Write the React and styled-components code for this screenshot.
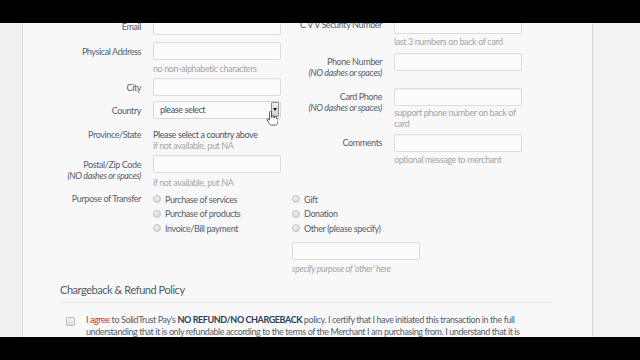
import React from 'react';
import styled, { createGlobalStyle } from 'styled-components';

const GlobalStyle = createGlobalStyle`
    html, body { margin: 0; padding: 0; background: #000; }
    body {
        font-family: "Lato", sans-serif;
        font-size: 9px;
        letter-spacing: -0.4px;
        color: #56616f;
    }
`;

/* FRAME */
const Screen = styled.div`
    width: 640px;
    height: 360px;
    display: flex;
    flex-direction: column;
    background: #000;
    overflow: hidden;
`;
const Letterbox = styled.div`
    height: ${p => p.$h}px;
    flex-shrink: 0;
    background: #000;
`;
const Viewport = styled.div`
    flex: 1;
    display: flex;
    overflow: hidden;
    background: #f1f1f1;
`;
const Gutter = styled.div`
    width: ${p => p.$w ? `${p.$w}px` : 'auto'};
    flex: ${p => p.$w ? 'none' : 1};
    background: ${p => p.$bg};
`;
const Panel = styled.main`
    width: 571px;
    flex-shrink: 0;
    box-sizing: border-box;
    background: #f8f8f8;
    border-left: 1px solid #dcdcdc;
    border-right: 1px solid #d2d2d2;
`;
const Content = styled.div`
    margin-top: -6px;
`;

/* FORM */
const Columns = styled.div`
    display: flex;
    align-items: flex-start;
`;
const Column = styled.div`
    display: flex;
    flex-direction: column;
    margin-top: ${p => p.$mt || 0}px;
`;
const Field = styled.div`
    display: grid;
    grid-template-columns: ${p => p.$lw}px 128px;
    column-gap: 12px;
    align-items: start;
    margin-bottom: ${p => p.$mb || 0}px;
`;
const Label = styled.div`
    text-align: right;
    line-height: 11px;
    padding-top: ${p => p.$pt ?? 3.5}px;
    color: #56616f;
    white-space: nowrap;
`;
const Sub = styled.div`
    font-style: italic;
`;
const Control = styled.div`
    display: flex;
    flex-direction: column;
`;
const Input = styled.div`
    width: ${p => p.$w || 128}px;
    height: 18px;
    box-sizing: border-box;
    border: 1px solid #dcdcdc;
    border-radius: 2px;
    background: #fcfcfc;
    box-shadow: inset 0 1px 1px rgba(0, 0, 0, 0.03);
    margin-top: ${p => p.$mt || 0}px;
`;
const Hint = styled.div`
    color: #a5a5a5;
    line-height: 11px;
    margin-top: ${p => p.$mt || 0}px;
    font-style: ${p => p.$italic ? 'italic' : 'normal'};
    white-space: nowrap;
`;
const Notice = styled.div`
    color: #4a5667;
    line-height: 11px;
`;

/* SELECT */
const Select = styled.div`
    position: relative;
    width: 128px;
    height: 18px;
    box-sizing: border-box;
    border: 1px solid #d6d6d6;
    border-radius: 2px;
    background: #fbfbfb;
    display: flex;
    align-items: flex-start;
`;
const SelectText = styled.span`
    flex: 1;
    line-height: 16px;
    padding-left: 6px;
    color: #4a5463;
`;
const DropButton = styled.span`
    width: 8px;
    height: 15px;
    box-sizing: border-box;
    margin-right: 1px;
    border: 1px solid #8f8f8f;
    border-radius: 1px;
    background: linear-gradient(#f2f2f2, #cfcfcf);
    display: flex;
    align-items: center;
    justify-content: center;
    &::after {
        content: '';
        border-left: 2px solid transparent;
        border-right: 2px solid transparent;
        border-top: 3px solid #111;
    }
`;
const Cursor = styled.svg`
    position: absolute;
    left: 112px;
    top: 9px;
    width: 12px;
    height: 15px;
`;

/* PURPOSE */
const Purpose = styled.div`
    display: grid;
    grid-template-columns: 118px auto;
    column-gap: 12px;
    margin-top: 4.25px;
`;
const PurposeLabel = styled(Label)`
    padding-top: 0;
    line-height: 14.5px;
`;
const Options = styled.div`
    display: grid;
    grid-template-columns: 139px auto;
`;
const OptionGroup = styled.div`
    display: flex;
    flex-direction: column;
`;
const Option = styled.label`
    height: 14.5px;
    display: flex;
    align-items: center;
    color: #56616f;
`;
const Radio = styled.span`
    width: 8px;
    height: 8px;
    box-sizing: border-box;
    border-radius: 50%;
    border: 1px solid #c4c4c4;
    background: radial-gradient(circle at 40% 35%, #f2f2f2, #cdcdcd);
    margin-right: 4px;
    flex-shrink: 0;
`;

/* POLICY */
const Heading = styled.h2`
    margin: 9.5px 40px 0 37px;
    padding-bottom: 5px;
    border-bottom: 1px solid #e7e7e7;
    font-size: 11px;
    letter-spacing: -0.45px;
    line-height: 14px;
    font-weight: normal;
    color: #535c67;
`;
const Agree = styled.div`
    display: flex;
    align-items: flex-start;
    margin: 11px 40px 0 43px;
`;
const CheckBox = styled.span`
    width: 9px;
    height: 9px;
    flex-shrink: 0;
    box-sizing: border-box;
    margin-top: 3px;
    border: 1px solid #bdbdbd;
    border-radius: 1px;
    background: linear-gradient(#f3f3f3, #dedede);
`;
const AgreeText = styled.p`
    margin: 0 0 0 11px;
    max-width: 446px;
    line-height: 12px;
    letter-spacing: -0.41px;
    color: #56616f;
`;
const Red = styled.span`
    color: #c53535;
`;
const Strong = styled.strong`
    color: #2d3d55;
`;

function HandCursor() {
    return (
        <Cursor viewBox="0 0 12 15">
            <path
                d="M3.5 1.5a1 1 0 0 1 2 0V6.5h.4V5.6a1 1 0 0 1 2 0V7h.4V6.2a1 1 0 0 1 2 0V7.6h.2a.9.9 0 0 1 1.5.7v2.6c0 1.6-1 3.2-2.6 3.2H5.6c-1.2 0-2-1-2.6-2L1.1 9a.9.9 0 0 1 1.4-1.1L3.5 9.2Z"
                fill="#fff"
                stroke="#222"
                strokeWidth="0.7"
                strokeLinejoin="round"
            />
        </Cursor>
    );
}

export default function App() {
    const leftOptions = ['Purchase of services', 'Purchase of products', 'Invoice/Bill payment'];
    const rightOptions = ['Gift', 'Donation', 'Other (please specify)'];

    return <>
        <GlobalStyle />
        <Screen>
            <Letterbox $h={23} />
            <Viewport>
                <Gutter $w={22} $bg="#f0f0f0" />
                <Panel>
                    <Content>
                        <Columns>
                            <Column>
                                <Field $lw={118} $mb={7}>
                                    <Label>Email</Label>
                                    <Control><Input /></Control>
                                </Field>
                                <Field $lw={118} $mb={4.5}>
                                    <Label>Physical Address</Label>
                                    <Control>
                                        <Input />
                                        <Hint $mt={2.5}>no non-alphabetic characters</Hint>
                                    </Control>
                                </Field>
                                <Field $lw={118} $mb={5}>
                                    <Label>City</Label>
                                    <Control><Input /></Control>
                                </Field>
                                <Field $lw={118} $mb={9.5}>
                                    <Label>Country</Label>
                                    <Control>
                                        <Select>
                                            <SelectText>please select</SelectText>
                                            <DropButton />
                                            <HandCursor />
                                        </Select>
                                    </Control>
                                </Field>
                                <Field $lw={118} $mb={4.5}>
                                    <Label $pt={0}>Province/State</Label>
                                    <Control>
                                        <Notice>Please select a country above</Notice>
                                        <Hint>if not available, put NA</Hint>
                                    </Control>
                                </Field>
                                <Field $lw={118}>
                                    <Label>
                                        Postal/Zip Code
                                        <Sub>(NO dashes or spaces)</Sub>
                                    </Label>
                                    <Control>
                                        <Input />
                                        <Hint $mt={3.5}>if not available, put NA</Hint>
                                    </Control>
                                </Field>
                            </Column>
                            <Column $mt={-1.5}>
                                <Field $lw={101} $mb={5.5}>
                                    <Label>C V V Security Number</Label>
                                    <Control>
                                        <Input />
                                        <Hint $mt={2.5}>last 3 numbers on back of card</Hint>
                                    </Control>
                                </Field>
                                <Field $lw={101} $mb={9.5}>
                                    <Label>
                                        Phone Number
                                        <Sub>(NO dashes or spaces)</Sub>
                                    </Label>
                                    <Control><Input /></Control>
                                </Field>
                                <Field $lw={101} $mb={5}>
                                    <Label>
                                        Card Phone
                                        <Sub>(NO dashes or spaces)</Sub>
                                    </Label>
                                    <Control>
                                        <Input />
                                        <Hint $mt={1}>support phone number on back of<br />card</Hint>
                                    </Control>
                                </Field>
                                <Field $lw={101}>
                                    <Label>Comments</Label>
                                    <Control>
                                        <Input />
                                        <Hint $mt={2}>optional message to merchant</Hint>
                                    </Control>
                                </Field>
                            </Column>
                        </Columns>

                        <Purpose>
                            <PurposeLabel>Purpose of Transfer</PurposeLabel>
                            <Options>
                                <OptionGroup>
                                    {leftOptions.map(o => <Option key={o}><Radio />{o}</Option>)}
                                </OptionGroup>
                                <OptionGroup>
                                    {rightOptions.map(o => <Option key={o}><Radio />{o}</Option>)}
                                    <Input $mt={7} />
                                    <Hint $mt={2.5} $italic>specify purpose of 'other' here</Hint>
                                </OptionGroup>
                            </Options>
                        </Purpose>

                        <Heading>Chargeback &amp; Refund Policy</Heading>
                        <Agree>
                            <CheckBox />
                            <AgreeText>
                                I <Red>agree</Red> to SolidTrust Pay's <Strong>NO REFUND/NO CHARGEBACK</Strong> policy.
                                I certify that I have initiated this transaction in the full understanding that it is
                                only refundable according to the terms of the Merchant I am purchasing from.
                                I understand that it is not possible to file a chargeback or a dispute for this payment.
                            </AgreeText>
                        </Agree>
                    </Content>
                </Panel>
                <Gutter $bg="#f3f3f3" />
            </Viewport>
            <Letterbox $h={23} />
        </Screen>
    </>;
}
